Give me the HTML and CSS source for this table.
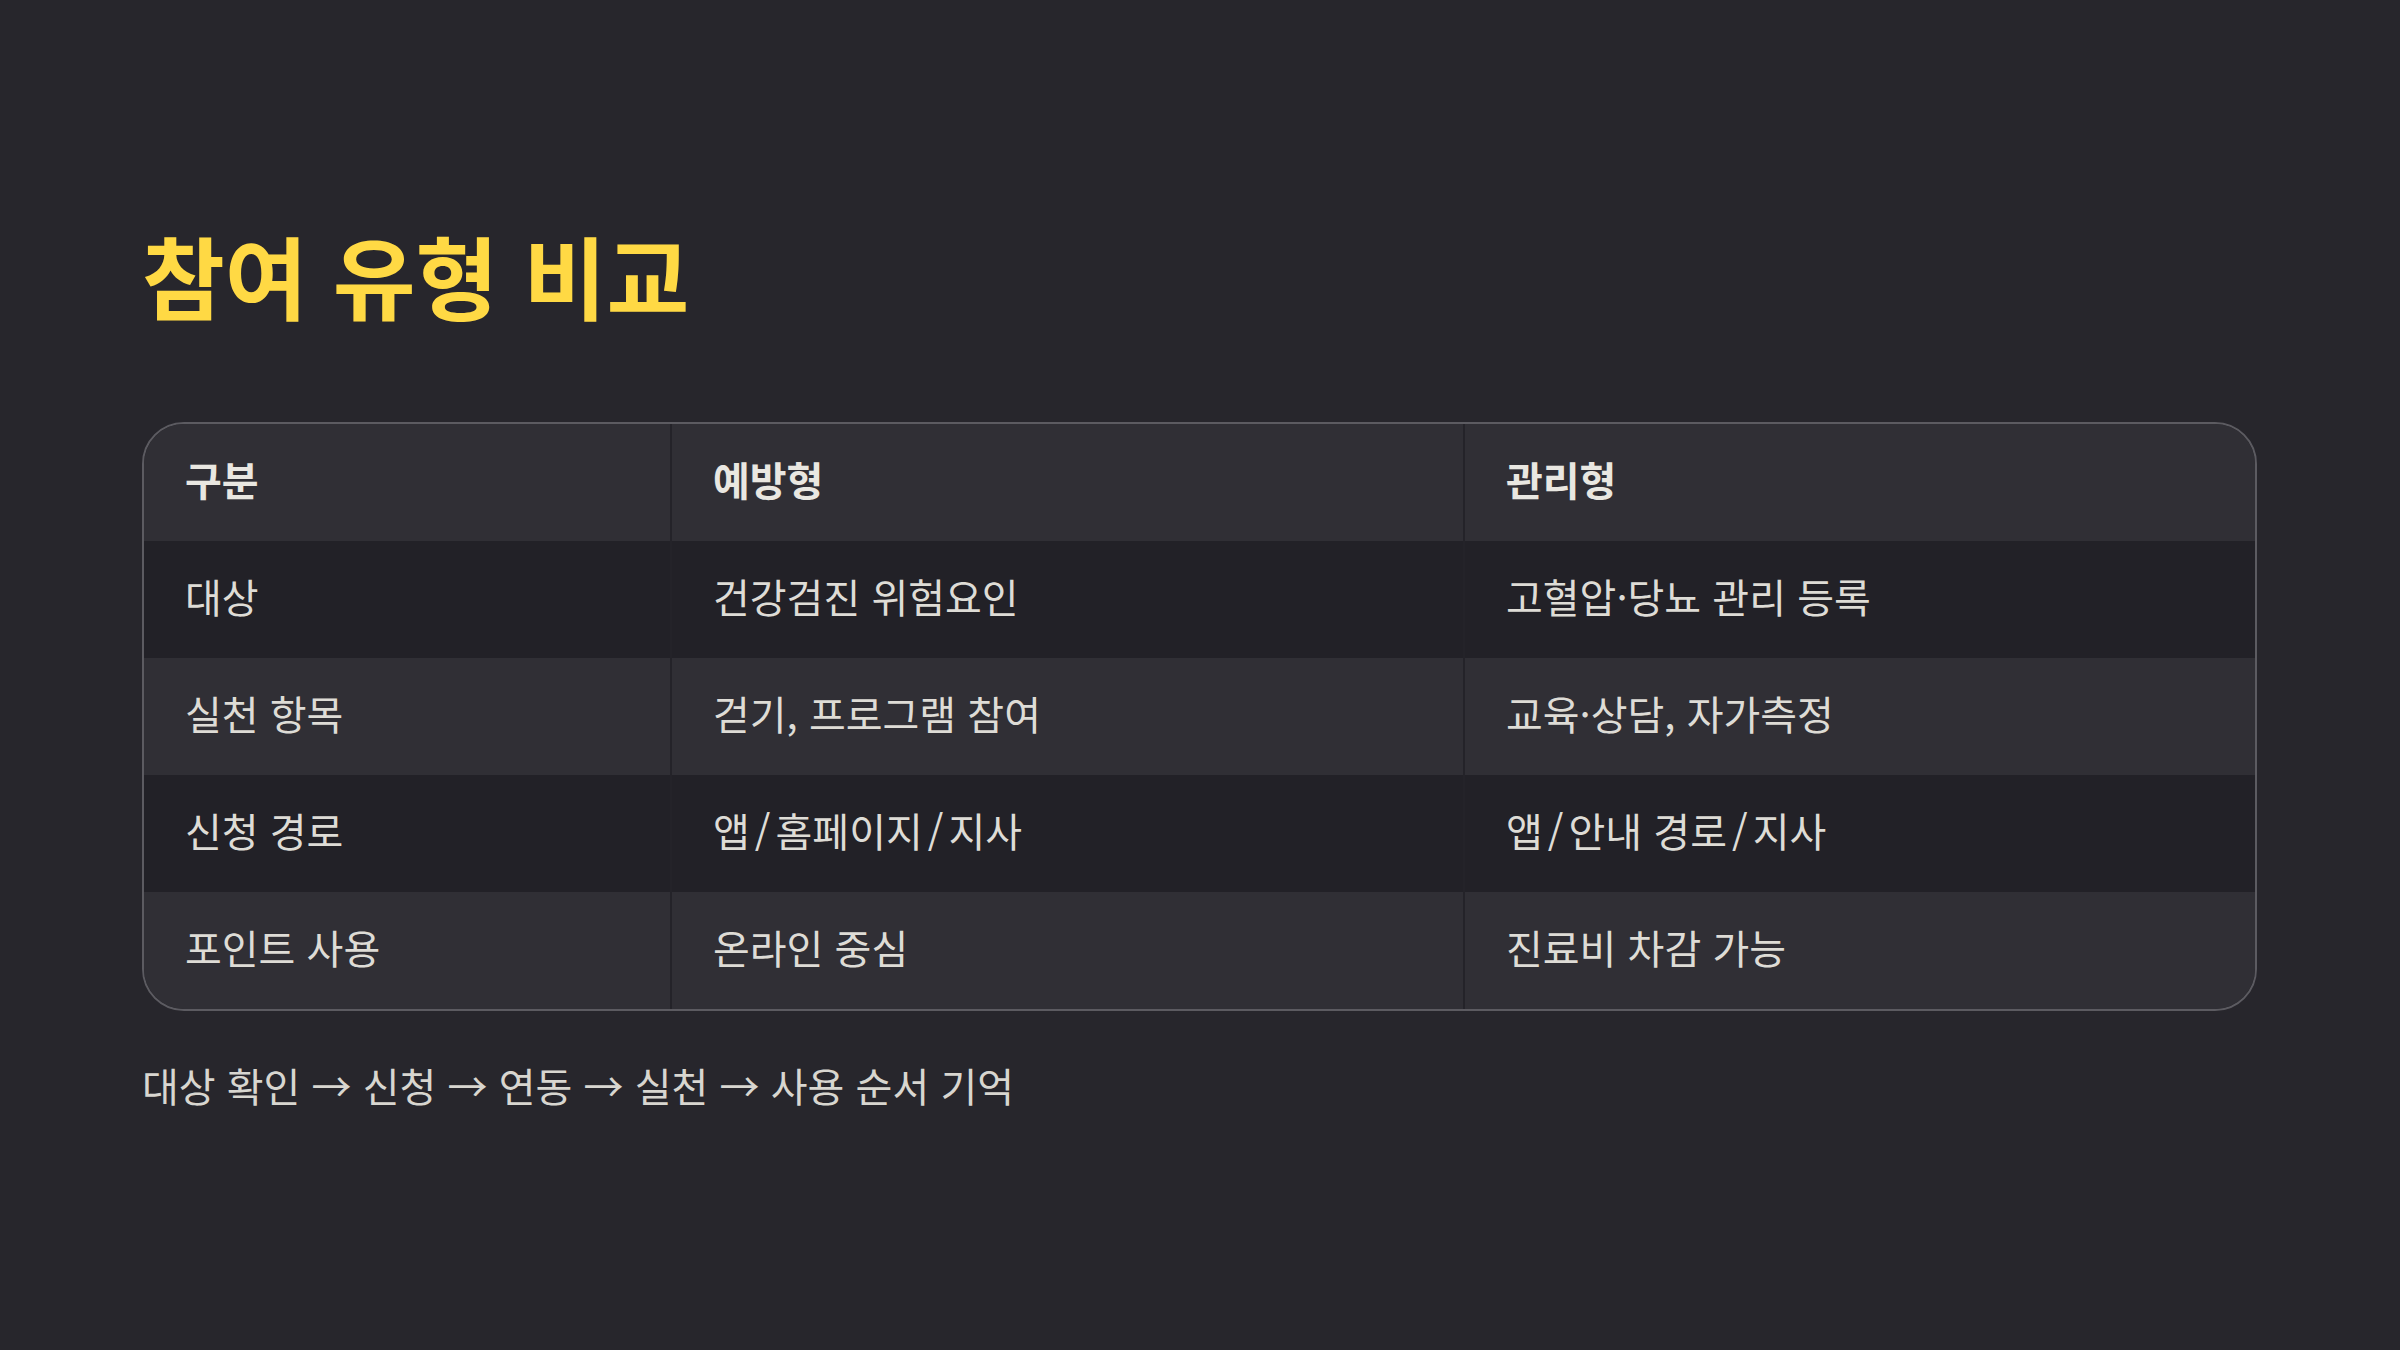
FILE: index.html
```html
<!DOCTYPE html>
<html lang="ko">
<head>
<meta charset="utf-8">
<title>참여 유형 비교</title>
<link rel="stylesheet" href="styles.css">
</head>
<body>
<main class="slide">
  <h1 class="title">참여 유형 비교</h1>
  <div class="table-wrap">
    <table class="compare">
      <colgroup>
        <col class="c1"><col class="c2"><col class="c3">
      </colgroup>
      <thead>
        <tr><th>구분</th><th>예방형</th><th>관리형</th></tr>
      </thead>
      <tbody>
        <tr><td>대상</td><td>건강검진 위험요인</td><td>고혈압·당뇨 관리 등록</td></tr>
        <tr><td>실천 항목</td><td>걷기, 프로그램 참여</td><td>교육·상담, 자가측정</td></tr>
        <tr><td>신청 경로</td><td>앱<span class="sl">/</span>홈페이지<span class="sl">/</span>지사</td><td>앱<span class="sl">/</span>안내 경로<span class="sl">/</span>지사</td></tr>
        <tr><td>포인트 사용</td><td>온라인 중심</td><td>진료비 차감 가능</td></tr>
      </tbody>
    </table>
  </div>
  <p class="note">대상 확인 → 신청 → 연동 → 실천 → 사용 순서 기억</p>
</main>
</body>
</html>
```

FILE: styles.css
```css
html, body {
  margin: 0;
  padding: 0;
  background: #27262c;
}
body {
  font-family: "Noto Sans CJK KR", "Noto Sans", sans-serif;
  color: #dedcd6;
}
.slide {
  width: 2400px;
  height: 1350px;
  box-sizing: border-box;
  padding: 220px 142px 0 142px;
}
.title {
  margin: 0;
  font-size: 90px;
  line-height: 108px;
  font-weight: 700;
  color: #ffd944;
  letter-spacing: 0;
}
.table-wrap {
  margin-top: 94px;
  border: 2px solid #5c5b61;
  border-radius: 42px;
  overflow: hidden;
  width: 2115px;
  box-sizing: border-box;
}
.compare {
  width: 100%;
  border-collapse: collapse;
  table-layout: fixed;
}
.c1 { width: 527px; }
.c2 { width: 793px; }
.c3 { width: auto; }
.compare th,
.compare td {
  height: 117px;
  padding: 0 0 8px 41px;
  box-sizing: border-box;
  text-align: left;
  vertical-align: middle;
  font-size: 40px;
  line-height: 1;
}
.compare th {
  font-weight: 700;
  color: #e9e7e1;
}
.compare td {
  font-weight: 400;
  color: #dedcd6;
}
.compare th + th,
.compare td + td {
  border-left: 2px solid #242329;
}
.compare thead tr,
.compare tbody tr:nth-child(even) {
  background: #302f35;
}
.compare tbody tr:nth-child(odd) {
  background: #222127;
}
.sl {
  padding: 0 5px;
}
.note {
  margin: 49px 0 0 0;
  font-size: 40px;
  line-height: 50px;
  color: #d8d6d0;
}
```
